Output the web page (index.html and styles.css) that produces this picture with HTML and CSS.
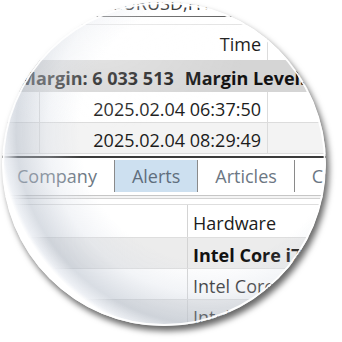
FILE: index.html
```html
<!DOCTYPE html>
<html>
<head>
<meta charset="utf-8">
<link rel="stylesheet" href="styles.css">
</head>
<body>
<div class="lens">
  <div class="screen">
    <div class="title">EURUSD,H1</div>
    <div class="spacer"></div>
    <div class="upper">
      <div class="row head"><div class="c c1"></div><div class="c c2 r">Time</div><div class="c c3"></div></div>
      <div class="row summary"><span class="m1">Margin: 6 033 513</span><span class="m2">Margin Level:</span></div>
      <div class="row"><div class="c c1"></div><div class="c c2 r">2025.02.04 06:37:50</div><div class="c c3"></div></div>
      <div class="row alt"><div class="c c1"></div><div class="c c2 r">2025.02.04 08:29:49</div><div class="c c3"></div></div>
    </div>
    <div class="divider"></div>
    <div class="tabs">
      <div class="tab">Company</div>
      <div class="tab active">Alerts</div>
      <div class="tab">Articles</div>
      <div class="tab">Code Base</div>
    </div>
    <div class="tabfoot"></div>
    <div class="lower">
      <div class="row lrow"><div class="c l1"></div><div class="c l2">Hardware</div></div>
      <div class="row lrow alt2"><div class="c l1"></div><div class="c l2 b">Intel Core i7</div></div>
      <div class="row lrow"><div class="c l1"></div><div class="c l2">Intel Core i5</div></div>
      <div class="row lrow alt2"><div class="c l1"></div><div class="c l2">Intel Core i3</div></div>
    </div>
  </div>
  <div class="glass"></div>
</div>
</body>
</html>
```
FILE: styles.css
```css
html, body {
  margin: 0;
  padding: 0;
  background: #ffffff;
  width: 342px;
  height: 342px;
  overflow: hidden;
}
.lens {
  position: relative;
  width: 324px;
  height: 324px;
  margin: 2px 0 0 2px;
  border-radius: 50%;
  overflow: hidden;
  box-shadow: 3px 5px 6px rgba(0, 0, 0, 0.6);
  background: #fff;
}
.screen {
  margin: -2px 0 0 -2px;
  width: 342px;
  font-family: "Open Sans", sans-serif;
  font-size: 18px;
  color: #1c1c1c;
}
.title {
  box-sizing: border-box;
  height: 17px;
  line-height: 6px;
  padding-right: 18px;
  text-align: center;
  border-bottom: 1px solid #5e5e5e;
  color: #2a2a2a;
}
.spacer {
  height: 7px;
  border-bottom: 1px solid #e4e4e4;
}
.row {
  display: grid;
  grid-template-columns: 40px 228px 74px;
  box-sizing: border-box;
  height: 31px;
  border-bottom: 1px solid #dcdcdc;
  line-height: 24px;
  white-space: nowrap;
}
.c {
  box-sizing: border-box;
  padding-top: 5px;
  border-right: 1px solid #dcdcdc;
  overflow: hidden;
}
.r {
  text-align: right;
  padding-right: 6px;
}
.head {
  height: 35px;
  border-bottom: none;
}
.head .c {
  padding-top: 7px;
}
.summary {
  display: flex;
  height: 32px;
  padding: 6px 0 0 19px;
  background: #d5d5d5;
  font-weight: 700;
  color: #111;
  border-bottom: none;
}
.m2 {
  margin-left: 11px;
}
.alt {
  background: #f3f3f3;
}
.divider {
  box-sizing: content-box;
  height: 2px;
  margin-top: 1px;
  border-top: 1px solid #fff;
  background: #3c3c3c;
}
.tabs {
  display: flex;
  height: 38px;
  padding-top: 2px;
  box-sizing: border-box;
  border-bottom: 1px solid #c6c6c6;
  white-space: nowrap;
}
.tab {
  box-sizing: border-box;
  height: 32px;
  padding: 4px 17px 0 17px;
  line-height: 24px;
  color: #6c7783;
  border-left: 1px solid #8a8a8a;
}
.tab:first-child {
  border-left: none;
}
.tab.active {
  background: #cde0f0;
  color: #5f6e7d;
}
.tabfoot {
  height: 2px;
  background: #f4f4f4;
  border-bottom: 1px solid #d2d2d2;
}
.lower {
  padding-top: 5px;
}
.lrow {
  grid-template-columns: 188px 154px;
  border-bottom: 1px solid #dedede;
}
.lower .lrow:first-child {
  border-top: 1px solid #dedede;
  height: 34px;
}
.lower .lrow:first-child .c {
  padding-top: 6px;
}
.l1 {
  border-right: 1px solid #d4d4d4;
}
.l2 {
  padding-left: 5px;
  border-right: none;
}
.alt2 {
  background: #ececec;
}
.b {
  font-weight: 700;
  color: #111;
}
.glass {
  position: absolute;
  inset: 0;
  border-radius: 50%;
  background:
    radial-gradient(ellipse 45% 25% at 30% 14%, rgba(255, 255, 255, 0.35), rgba(255, 255, 255, 0) 100%),
    radial-gradient(circle 210px at 64% 40%, rgba(255, 255, 255, 0) 62%, rgba(214, 220, 230, 0.3) 77%, rgba(178, 187, 200, 0.5) 92%, rgba(236, 239, 244, 0.9) 98%, rgba(255, 255, 255, 1) 100%);
  box-shadow: inset 0 0 0 2px rgba(255, 255, 255, 0.95);
  pointer-events: none;
}
```
